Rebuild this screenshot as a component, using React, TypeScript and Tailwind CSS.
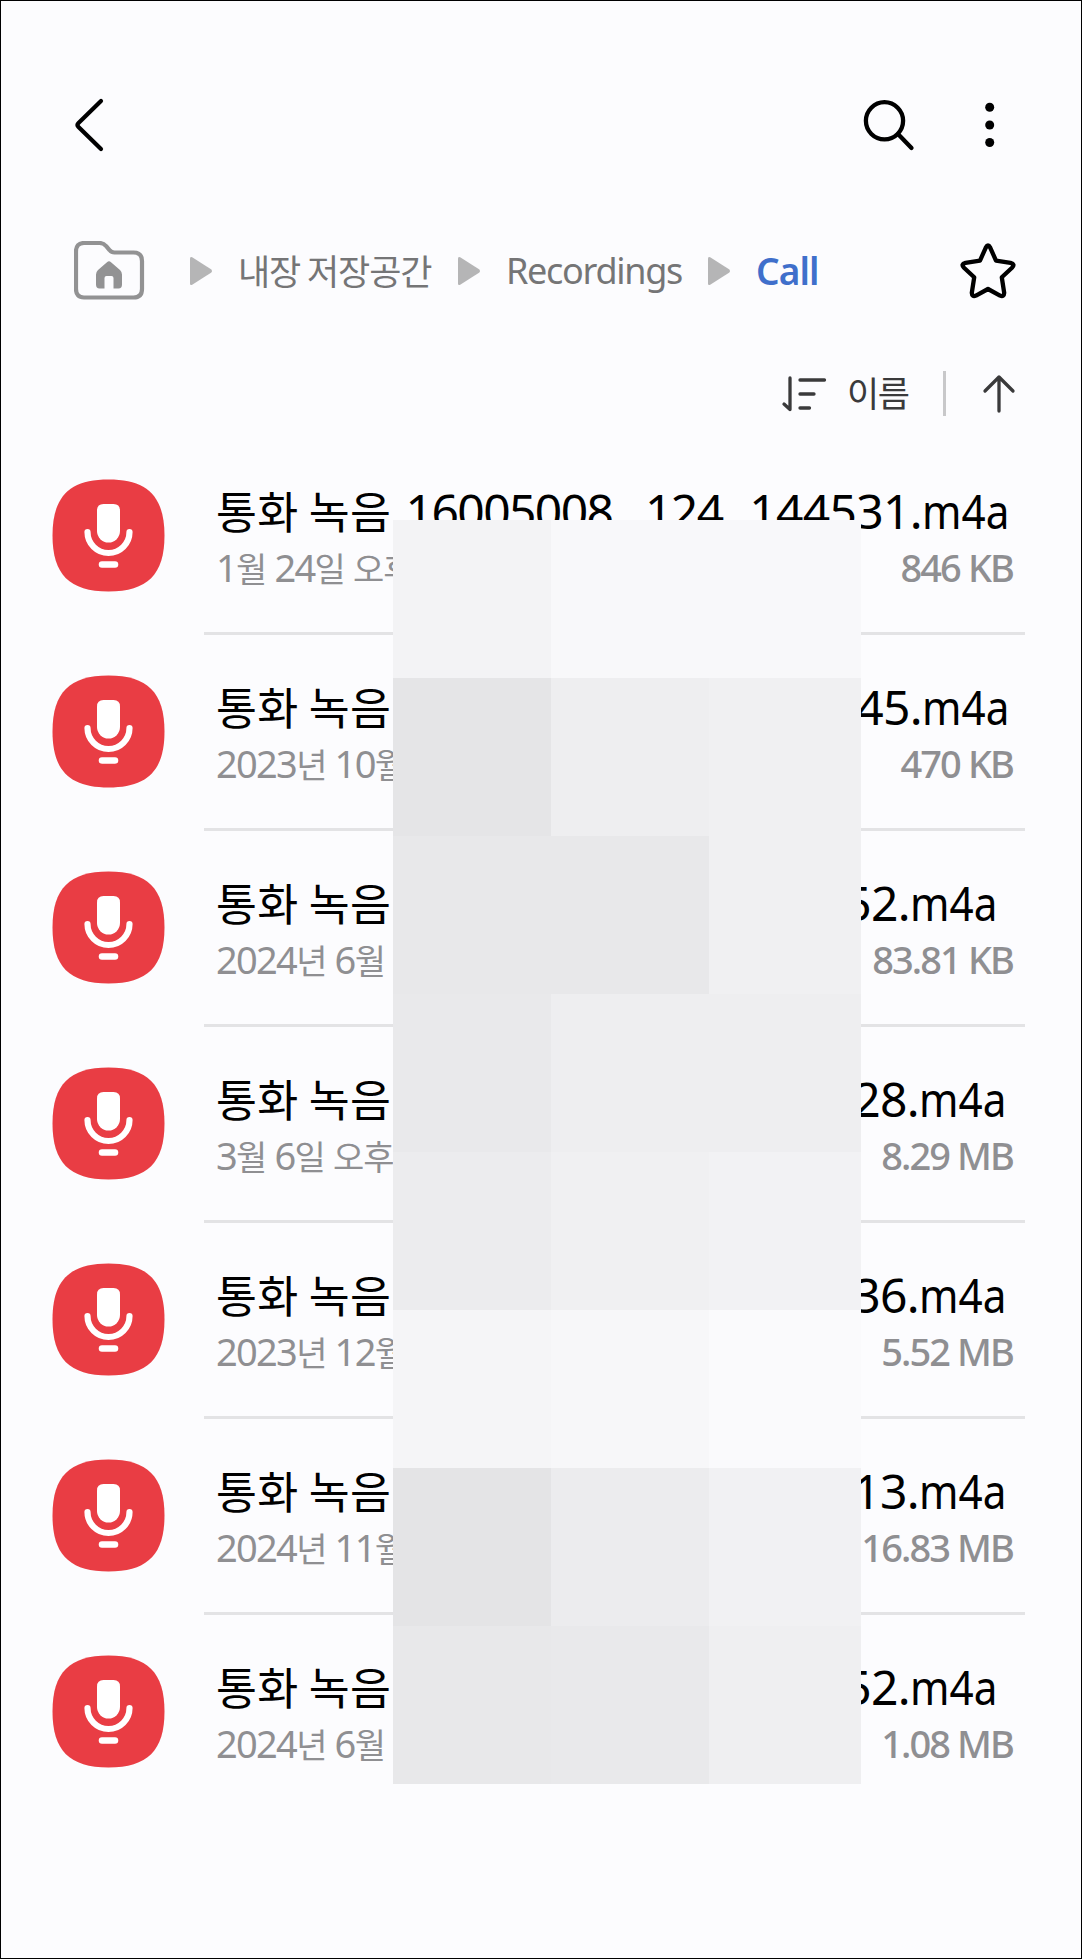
import React from "react";

type Recording = {
  name: string;
  lead?: string;
  tail: string;
  tailClass: string;
  date: string;
  size: string;
};

const recordings: Recording[] = [
  { name: "통화 녹음", lead: "16005008_ 124_", tail: "144531.", tailClass: "pr-[16px]", date: "1월 24일 오후", size: "846 KB" },
  { name: "통화 녹음", tail: "45.", tailClass: "pr-[16px]", date: "2023년 10월", size: "470 KB" },
  { name: "통화 녹음", tail: "52.", tailClass: "pr-[28px]", date: "2024년 6월", size: "83.81 KB" },
  { name: "통화 녹음", tail: "28.", tailClass: "pr-[19px]", date: "3월 6일 오후", size: "8.29 MB" },
  { name: "통화 녹음", tail: "36.", tailClass: "pr-[19px]", date: "2023년 12월", size: "5.52 MB" },
  { name: "통화 녹음", tail: "13.", tailClass: "pr-[19px]", date: "2024년 11월", size: "16.83 MB" },
  { name: "통화 녹음", tail: "52.", tailClass: "pr-[28px]", date: "2024년 6월", size: "1.08 MB" },
];

const mosaic = [
  "bg-[#f3f3f5]", "bg-[#f8f8fa]", "bg-[#f8f8fa]",
  "bg-[#e5e5e7]", "bg-[#eeeef0]", "bg-[#f0f0f2]",
  "bg-[#e8e8ea]", "bg-[#e8e8ea]", "bg-[#f0f0f2]",
  "bg-[#e9e9eb]", "bg-[#eeeef0]", "bg-[#eeeef0]",
  "bg-[#ececee]", "bg-[#f0f0f2]", "bg-[#f2f2f4]",
  "bg-[#f5f5f7]", "bg-[#f7f7f9]", "bg-[#fafafc]",
  "bg-[#e4e4e6]", "bg-[#ececee]", "bg-[#f1f1f3]",
  "bg-[#e8e8ea]", "bg-[#e9e9eb]", "bg-[#efeff1]",
];

function MicIcon() {
  return (
    <svg width="113" height="113" viewBox="-0.500 -0.500 113 113" className="block">
      <path d="M56 0C95 0 112 17 112 56S95 112 56 112S0 95 0 56S17 0 56 0Z" fill="#e93d44" />
      <path d="M51 24.5H61Q67.500 24.500 67.500 31V51.500A11.500 11.500 0 0 1 44.500 51.500V31Q44.500 24.500 51 24.500Z" fill="#fff" />
      <path d="M35 52.500A21 21 0 0 0 77 52.500" fill="none" stroke="#fff" strokeWidth="6.200" strokeLinecap="round" />
      <path d="M49.500 85H62.500" stroke="#fff" strokeWidth="6.500" strokeLinecap="round" />
    </svg>
  );
}

function Crumb() {
  return (
    <svg width="22" height="30" viewBox="0 0 22 30" className="block shrink-0">
      <path d="M0 2.500Q0 .2 2.200 1.300L21 13.200Q23 15 21 16.800L2.200 28.700Q0 29.800 0 27.500Z" fill="#b5b5b6" />
    </svg>
  );
}

/* Splits mixed text so Hangul and Latin runs get their own metrics. */
function Mixed({ text, hangul }: { text: string; hangul: string }) {
  return (
    <>
      {text.split(/([가-힣]+)/).map((part, i) =>
        /[가-힣]/.test(part) ? (
          <span key={i} className={hangul}>{part}</span>
        ) : (
          <span key={i}>{part}</span>
        )
      )}
    </>
  );
}

export default function App() {
  return (
    <div className="relative flex h-[1959px] w-[1082px] flex-col overflow-hidden border border-black bg-[#fcfcfe] font-['Noto_Sans','Noto_Sans_CJK_KR',sans-serif] whitespace-pre">
      <header className="flex h-[180px] items-start pt-[94px] pl-[72px]">
        <svg width="40" height="60" viewBox="0 0 40 60">
          <path d="M28 6L5.500 28Q3.500 30 5.500 32L28 54" fill="none" stroke="#000" strokeWidth="4.200" strokeLinecap="round" strokeLinejoin="round" />
        </svg>
        <svg width="60" height="60" viewBox="0 0 60 60" className="ml-[746px]">
          <circle cx="25.500" cy="25.800" r="18.600" fill="none" stroke="#000" strokeWidth="4.300" />
          <path d="M39 39L52.500 53" stroke="#000" strokeWidth="4.300" strokeLinecap="round" />
        </svg>
        <svg width="20" height="60" viewBox="0 0 20 60" className="ml-[60px]">
          <circle cx="10.700" cy="12.300" r="4.500" />
          <circle cx="10.700" cy="30" r="4.500" />
          <circle cx="10.700" cy="47.500" r="4.500" />
        </svg>
      </header>

      <nav className="flex h-[180px] items-center pl-[73px] text-[37px] leading-[50px] text-[#757576]">
        <svg width="71" height="60" viewBox="0.500 1 71 60" className="shrink-0">
          <path d="M10.500 3H26Q30 3 32.500 6L36 10Q38 12.500 41 12.500H60Q68.500 12.500 68.500 21V49Q68.500 57.500 60 57.500H10.500Q2.500 57.500 2.500 49V11.500Q2.500 3 10.500 3Z" fill="none" stroke="#929293" strokeWidth="4.200" />
          <path d="M33.500 22.200Q35.500 20.500 37.500 22.200L46.500 30Q48.500 32 48.500 34.500V44.500Q48.500 48.500 45 48.500H40V38Q40 36 38 36H33Q31 36 31 38V48.500H26Q22.500 48.500 22.500 44.500V34.500Q22.500 32 24.500 30Z" fill="#929293" />
        </svg>
        <div className="ml-[45px]"><Crumb /></div>
        <span className="ml-[26px] w-[220px] font-['Noto_Sans_CJK_KR'] text-[35px] leading-[46px] tracking-[-1.100px] pb-[2px]">내장 저장공간</span>
        <Crumb />
        <span className="ml-[26px] w-[202px] text-[36px] tracking-[-1.300px]">Recordings</span>
        <Crumb />
        <span className="ml-[26px] w-[204px] text-[37px] font-semibold tracking-[-0.900px] text-[#3f6fcb]">Call</span>
        <svg width="56" height="56" viewBox="0 0.200 56 56" className="shrink-0">
          <path d="M25.800 4.800Q28 .5 30.200 4.800L36 17.800L50.500 20Q55.500 21.300 52 25L41.800 34.500L44.200 50Q44 54.500 40 52.800L28 46.200L16 52.800Q12 54.500 11.800 50L14.200 34.500L4 25Q.5 21.300 5.500 20L20 17.800Z" fill="none" stroke="#000" strokeWidth="4.300" strokeLinejoin="round" />
        </svg>
      </nav>

      <div className="flex h-[78px] items-start pl-[780px] pt-[8px]">
        <svg width="46" height="46" viewBox="0 0 46 46" className="shrink-0" fill="none" stroke="#3a3a3b" strokeWidth="3.300" strokeLinecap="round" strokeLinejoin="round">
          <path d="M9 9V40.500L3 35M19 11H43.500M19 25H33M19 39H28.500" />
        </svg>
        <span className="ml-[20px] w-[96px] font-['Noto_Sans_CJK_KR'] text-[35px] leading-[46px] tracking-[-1.500px] text-[#3a3a3b]">이름</span>
        <div className="mt-[2px] h-[45px] w-[3px] bg-[#c8c8ca]" />
        <svg width="36" height="46" viewBox="0 0 36 46" className="ml-[35px]" fill="none" stroke="#3a3a3b" strokeWidth="3.300" strokeLinecap="round" strokeLinejoin="round">
          <path d="M18 42V8M4 22L18 8L32 22" />
        </svg>
      </div>

      <main>
        {recordings.map((r, i) => (
          <section key={i} className="flex h-[196px] pl-[51px]">
            <div className="w-[152px] shrink-0 pt-[40px]">
              <MicIcon />
            </div>
            <div className={i < 6 ? "w-[821px] border-b-3 border-[#e3e3e5] pt-[41px] pl-[12px]" : "w-[821px] pt-[41px] pl-[12px]"}>
              <div className="flex h-[62px] items-baseline justify-between text-[48px] leading-[60px] tracking-[-0.700px] text-black">
                <span className="font-['Noto_Sans_CJK_KR'] text-[44.500px] tracking-[0.300px]">{r.name}</span>
                <span className={r.tailClass}>
                  {r.lead && <span className="mr-[7px] tracking-[-1.600px] [word-spacing:2px]">{r.lead}</span>}
                  {r.tail}
                  <span className="inline-block w-[87px] origin-left scale-x-[0.88] tracking-normal">m4a</span>
                </span>
              </div>
              <div className="flex h-[50px] items-baseline justify-between pr-[12px] text-[38px] leading-[50px] tracking-[-1.700px] text-[#8f8f92]">
                <span>
                  <Mixed text={r.date} hangul="font-['Noto_Sans_CJK_KR'] text-[34px] leading-none tracking-[-1px]" />
                </span>
                <span className="font-medium tracking-[-1.900px]">{r.size}</span>
              </div>
            </div>
          </section>
        ))}
      </main>

      {/* pixelated privacy mask over the list */}
      <div className="absolute top-[519px] left-[392px] grid h-[1264px] w-[468px] auto-rows-fr grid-cols-[158px_158px_152px]">
        {mosaic.map((c, i) => (
          <div key={i} className={c} />
        ))}
      </div>
    </div>
  );
}
